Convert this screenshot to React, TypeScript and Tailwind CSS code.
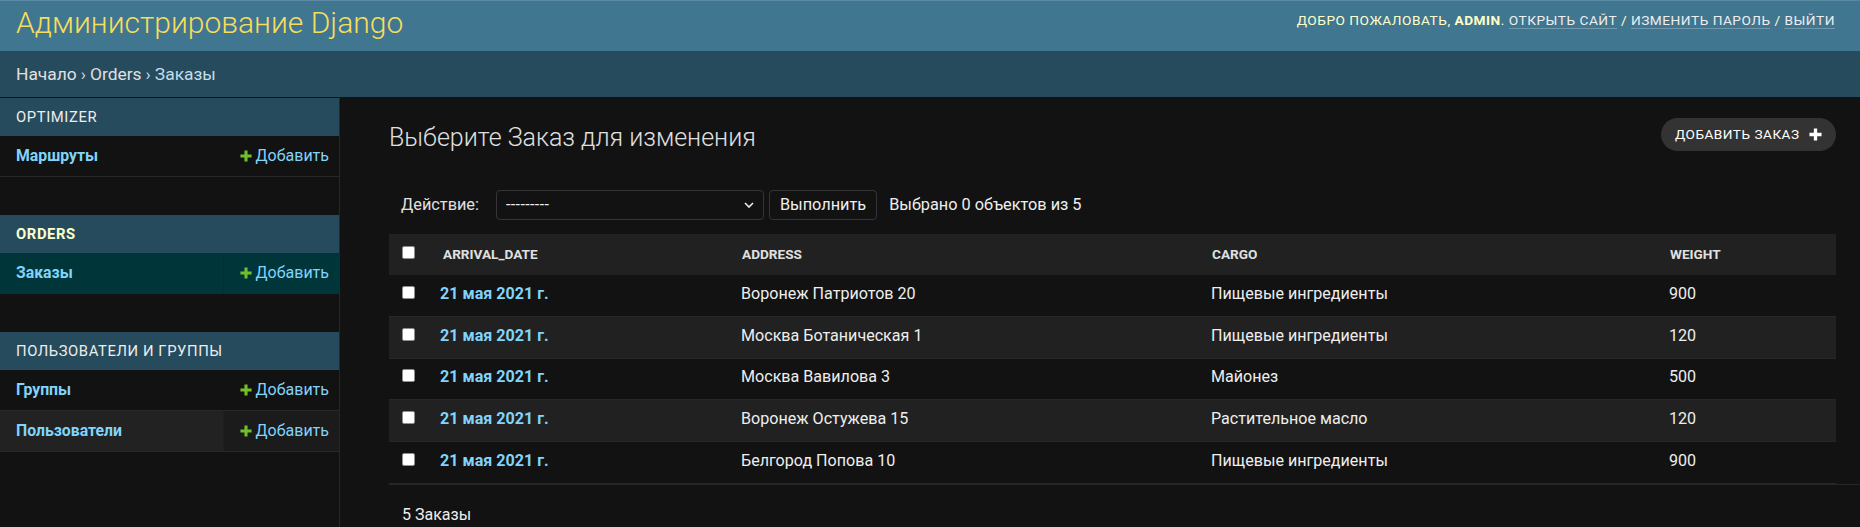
import React from 'react';

const font = { fontFamily: 'Roboto, "Noto Sans", "Liberation Sans", sans-serif' };

const orders = [
  { date: '21 мая 2021 г.', address: 'Воронеж Патриотов 20', cargo: 'Пищевые ингредиенты', weight: '900' },
  { date: '21 мая 2021 г.', address: 'Москва Ботаническая 1', cargo: 'Пищевые ингредиенты', weight: '120' },
  { date: '21 мая 2021 г.', address: 'Москва Вавилова 3', cargo: 'Майонез', weight: '500' },
  { date: '21 мая 2021 г.', address: 'Воронеж Остужева 15', cargo: 'Растительное масло', weight: '120' },
  { date: '21 мая 2021 г.', address: 'Белгород Попова 10', cargo: 'Пищевые ингредиенты', weight: '900' },
];

const modules = [
  { caption: 'Optimizer', current: false, models: [{ name: 'Маршруты', state: '' }] },
  { caption: 'Orders', current: true, models: [{ name: 'Заказы', state: 'current' }] },
  {
    caption: 'Пользователи и группы',
    current: false,
    models: [
      { name: 'Группы', state: '' },
      { name: 'Пользователи', state: 'hover' },
    ],
  },
];

function Plus({ className }: { className: string }) {
  return (
    <svg viewBox="0 0 14 14" className={className}>
      <path d="M5.2 0.5h3.6v4.7h4.7v3.6H8.8v4.7H5.2V8.8H0.5V5.2h4.7z" fill="currentColor" />
    </svg>
  );
}

function Checkbox() {
  return <span className="block w-[13px] h-[13px] bg-white rounded-[2px] border border-[#8f8f8f]" />;
}

function Sidebar() {
  return (
    <nav className="w-[340px] shrink-0 border-r border-[#272727] pt-[1px]">
      {modules.map((m) => (
        <div key={m.caption} className="mb-[38px]">
          <div
            className={`h-[38px] flex items-center pl-[16px] bg-[#264b5d] uppercase tracking-[0.6px] text-[14.8px] ${
              m.current ? 'text-[#ffffcc] font-bold' : 'text-[#eeeeee]'
            }`}
          >
            {m.caption}
          </div>
          {m.models.map((row) => (
            <div
              key={row.name}
              className={`h-[41px] flex border-b border-[#272727] ${
                row.state === 'current' ? 'bg-[#00363a]' : row.state === 'hover' ? 'bg-[#1b1b1b]' : ''
              }`}
            >
              <div
                className={`flex-1 flex items-center pl-[16px] font-bold text-[15.8px] text-[#81d4fa] border-r ${
                  row.state === 'current' ? 'border-[#0a2c2f]' : row.state === 'hover' ? 'bg-[#222222] border-[#1e1e1e]' : 'border-transparent'
                }`}
              >
                {row.name}
              </div>
              <div className="w-[115px] flex items-center justify-end pr-[10px] gap-[4px] text-[16px] text-[#81d4fa]">
                <Plus className="w-[12px] h-[12px] text-[#70bf2b]" />
                Добавить
              </div>
            </div>
          ))}
        </div>
      ))}
    </nav>
  );
}

export default function App() {
  return (
    <div className="min-h-[527px] bg-[#121212] text-[#eeeeee] overflow-hidden" style={font}>
      <header className="h-[51px] bg-[#417690] border-t border-[#5a8aa3] flex items-center justify-between pl-[16px] pr-[25px]">
        <div className="text-[30px] font-light text-[#f5dd5d] leading-none -mt-[6px]">Администрирование Django</div>
        <div className="text-[13.7px] uppercase tracking-[0.5px] text-[#ffffcc] -mt-[12px]">
          Добро пожаловать, <strong className="font-bold">admin</strong>.{' '}
          <span className="border-b border-white/25 text-[#eeeeee]">Открыть сайт</span> /{' '}
          <span className="border-b border-white/25 text-[#eeeeee]">Изменить пароль</span> /{' '}
          <span className="border-b border-white/25 text-[#eeeeee]">Выйти</span>
        </div>
      </header>

      <div className="h-[46px] bg-[#264b5d] flex items-center pl-[16px] text-[17.4px] text-[#c4dce8]">
        <span className="text-[#e0e0e0]">Начало</span>
        <span className="mx-[4px]">›</span>
        <span className="text-[#e0e0e0]">Orders</span>
        <span className="mx-[4px]">›</span>
        <span>Заказы</span>
      </div>

      <div className="flex">
        <Sidebar />

        <main className="flex-1 pl-[49px] pr-[24px] pt-[21px]">
          <div className="flex items-start justify-between">
            <h1 className="text-[25px] font-light text-[#e0e0e0] mt-[5px] leading-[30px]">Выберите Заказ для изменения</h1>
            <div className="h-[33px] w-[175px] rounded-full bg-[#333333] flex items-center pl-[14px] gap-[9px] text-white text-[13.6px] uppercase tracking-[0.5px]">
              Добавить заказ
              <Plus className="w-[13px] h-[13px] text-white" />
            </div>
          </div>

          <div className="mt-[37px] h-[30px] flex items-center text-[16.3px] text-[#eeeeee]">
            <span className="ml-[12px] text-[#e0e0e0]">Действие:</span>
            <div className="ml-[17px] w-[268px] h-[30px] border border-[#353535] rounded-[4px] flex items-center justify-between pl-[9px] pr-[9px]">
              <span className="text-[16px] tracking-[0.4px]">---------</span>
              <svg viewBox="0 0 10 6" className="w-[10px] h-[6px]">
                <path d="M1 1l4 4 4-4" stroke="#eeeeee" strokeWidth="1.6" fill="none" />
              </svg>
            </div>
            <div className="ml-[5px] h-[30px] px-[10px] border border-[#353535] rounded-[4px] flex items-center">Выполнить</div>
            <span className="ml-[12px]">Выбрано 0 объектов из 5</span>
          </div>

          <div className="mt-[14px] text-[16.1px]">
            <div className="grid grid-cols-[54px_299px_470px_458px_1fr] h-[41px] items-center bg-[#212121] text-[13.6px] font-bold uppercase text-[#e0e0e0]">
              <div className="pl-[13px] pb-[4px]">
                <Checkbox />
              </div>
              <div>arrival_date</div>
              <div>address</div>
              <div>cargo</div>
              <div>weight</div>
            </div>
            {orders.map((o, i) => (
              <div
                key={i}
                className={`grid grid-cols-[51px_301px_470px_458px_1fr] h-[41.8px] items-center border-b border-[#272727] ${
                  i % 2 === 1 ? 'bg-[#212121]' : 'bg-[#121212]'
                }`}
              >
                <div className="pl-[13px] pb-[6px]">
                  <Checkbox />
                </div>
                <div className="font-bold text-[#81d4fa] pb-[3px]">{o.date}</div>
                <div className="pb-[3px]">{o.address}</div>
                <div className="pb-[3px]">{o.cargo}</div>
                <div className="pb-[3px]">{o.weight}</div>
              </div>
            ))}
          </div>

          <div className="mr-[-24px] h-[46px] pt-[21px] pl-[13px] text-[16px] leading-[18px] border-t border-[#272727] border-b">
            5 Заказы
          </div>
        </main>
      </div>
    </div>
  );
}
